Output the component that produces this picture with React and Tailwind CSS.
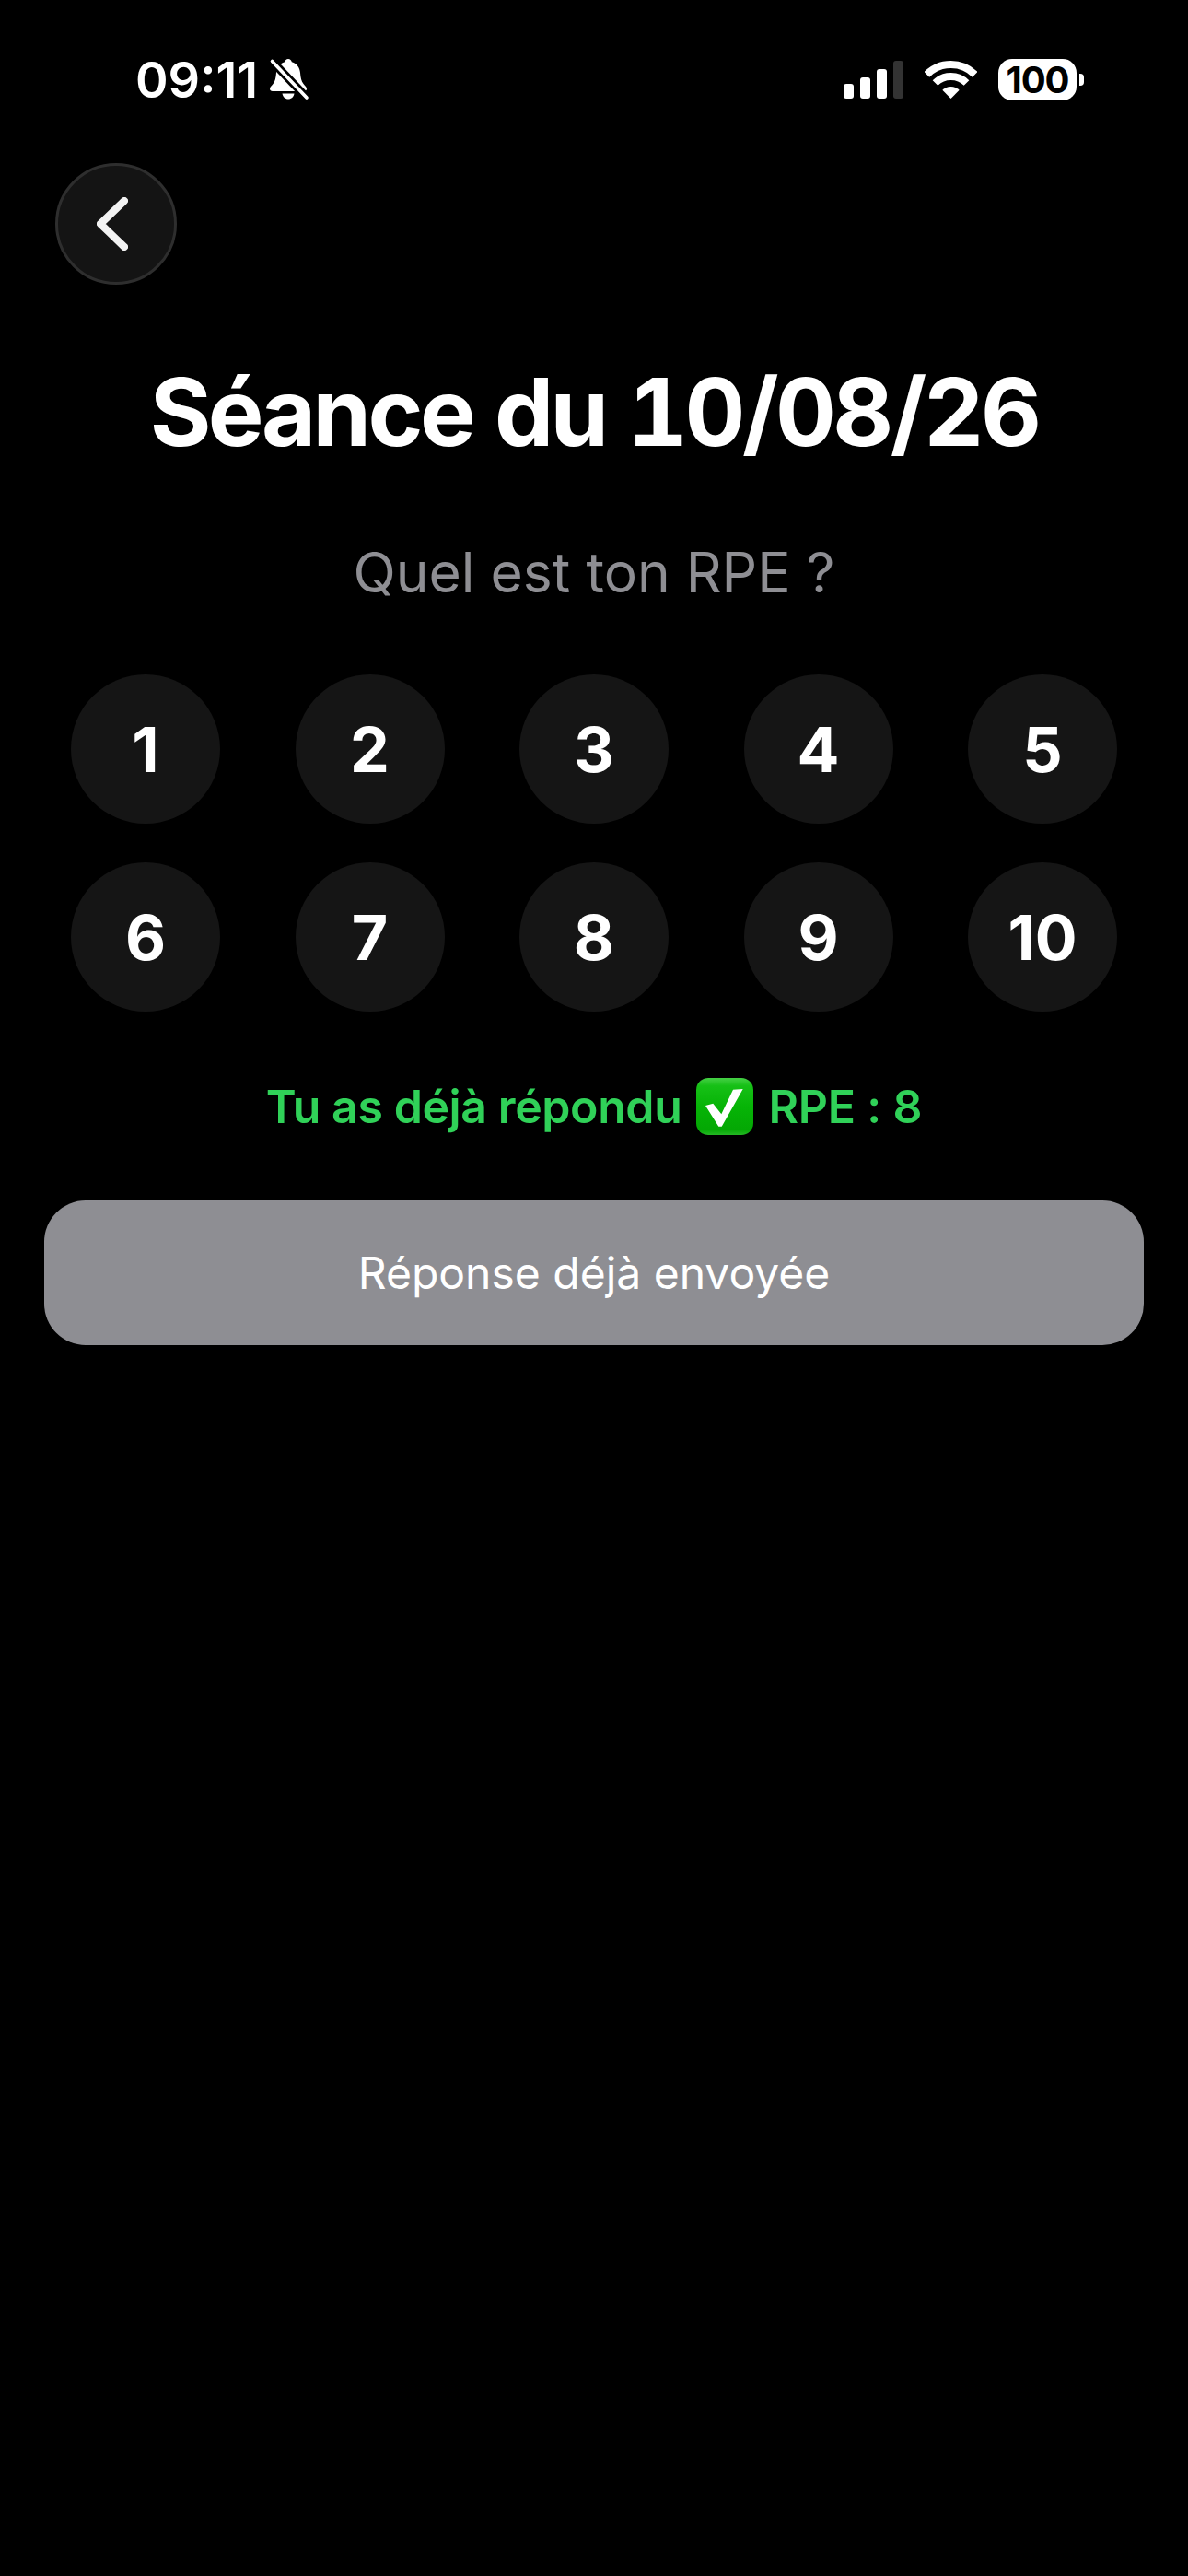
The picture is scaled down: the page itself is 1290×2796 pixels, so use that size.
const font = "font-['Inter','Liberation_Sans',sans-serif]";

function BellSlash() {
  return (
    <svg width="44" height="46" viewBox="0 0 44 46" className="ml-[12px] mt-[-2px]">
      <path
        d="M21 1c-2 0-3.400 1.400-3.800 3.200C11.500 5.800 8.500 10.500 8 16c-.4 5.500-1.200 9-3.500 12C3 30 1 31.500 1 33.500 1 35 2.200 36 4 36h34c1.800 0 3-1 3-2.500 0-2-2-3.500-3.500-5.500-2.300-3-3.100-6.500-3.500-12-.5-5.500-3.500-10.200-9.200-11.800C24.400 2.400 23 1 21 1z"
        fill="#fff"
      />
      <path d="M14.500 38.500h13c-.6 3.800-3.200 6-6.500 6s-5.900-2.200-6.500-6z" fill="#fff" />
      <path d="M3 3l38 40" stroke="#000" strokeWidth="9" />
      <path d="M3.500 3.500l37.500 39.500" stroke="#fff" strokeWidth="3.600" strokeLinecap="round" />
    </svg>
  );
}

function Signal() {
  return (
    <div className="flex items-end gap-[7px] h-[41px]">
      <div className="w-[11px] h-[16px] rounded-[3px] bg-white" />
      <div className="w-[11px] h-[23px] rounded-[3px] bg-white" />
      <div className="w-[11px] h-[32px] rounded-[3px] bg-white" />
      <div className="w-[11px] h-[41px] rounded-[3px] bg-[#333333]" />
    </div>
  );
}

function Wifi() {
  return (
    <svg width="57" height="41" viewBox="0 0 57 41">
      <path d="M2.340 14.840A37 37 0 0 1 54.660 14.840" fill="none" stroke="#fff" strokeWidth="8" />
      <path d="M11.530 24.030A24 24 0 0 1 45.470 24.030" fill="none" stroke="#fff" strokeWidth="8" />
      <path d="M28.500 41L19.310 31.810A13 13 0 0 1 37.690 31.810z" fill="#fff" />
    </svg>
  );
}

function Battery() {
  return (
    <div className="flex items-center gap-[3px]">
      <div className="w-[85px] h-[45px] rounded-[15px] bg-white flex items-center justify-center text-black text-[40px] font-bold tracking-[-1px] leading-none">
        100
      </div>
      <div className="w-[5px] h-[13px] rounded-r-[4px] bg-white" />
    </div>
  );
}

function CheckEmoji() {
  return (
    <svg width="62" height="62" viewBox="0 0 62 62" className="shrink-0">
      <defs>
        <linearGradient id="checkGreen" x1="0" y1="0" x2="0" y2="1">
          <stop offset="0" stopColor="#45d045" />
          <stop offset="0.14" stopColor="#16c016" />
          <stop offset="0.5" stopColor="#06b406" />
          <stop offset="0.9" stopColor="#04a804" />
          <stop offset="1" stopColor="#24b824" />
        </linearGradient>
      </defs>
      <rect x="0" y="0" width="62" height="62" rx="13" fill="url(#checkGreen)" />
      <path d="M10 30l8.300-2.300 9 11.600L40 12.700 50.700 12 27.700 52.700h-3.400z" fill="#fff" />
    </svg>
  );
}

export default function App() {
  const notes = [1, 2, 3, 4, 5, 6, 7, 8, 9, 10];

  return (
    <div className={`${font} min-h-[2796px] bg-black text-white flex flex-col`}>
      <div className="flex items-center justify-between pt-[64px] pl-[147px] pr-[113px] h-[109px]">
        <div className="flex items-center">
          <span className="text-[54px] font-semibold leading-none">09:11</span>
          <BellSlash />
        </div>
        <div className="flex items-center gap-[23px]">
          <Signal />
          <Wifi />
          <Battery />
        </div>
      </div>

      <div className="pl-[60px] mt-[68px]">
        <button className="w-[132px] h-[132px] rounded-full bg-[#141414] border-[3px] border-[#2e2e2e] flex items-center justify-center pr-2">
          <svg width="34" height="58" viewBox="0 0 34 58">
            <path d="M30 4L4 29l26 25" fill="none" stroke="#f2f2f2" strokeWidth="8" strokeLinecap="round" strokeLinejoin="round" />
          </svg>
        </button>
      </div>

      <h1 className="mt-[78px] text-center text-[102px] leading-[120px] font-bold tracking-[-3.6px] tabular-nums">
        Séance du 10/08/26
      </h1>

      <p className="mt-[74px] text-center text-[60.500px] leading-[80px] text-[#8e8e93]">Quel est ton RPE ?</p>

      <div className="mt-[71px] px-[77px] grid grid-cols-[repeat(5,162px)] gap-y-[42px] justify-between">
        {notes.map((n) => (
          <div
            key={n}
            className="w-[162px] h-[162px] rounded-full bg-[#151515] flex items-center justify-center text-[68px] font-bold"
          >
            {n}
          </div>
        ))}
      </div>

      <div className="mt-[72px] flex items-center justify-center gap-[16px] text-[50px] font-semibold text-[#30d158] h-[62px]">
        <span className="tracking-[-0.4px]">Tu as déjà répondu</span>
        <CheckEmoji />
        <span className="tracking-[-0.2px]">RPE : 8</span>
      </div>

      <div className="mt-[71px] mx-[48px] h-[157px] rounded-[45px] bg-[#8e8e93] flex items-center justify-center text-[48px] text-white">
        Réponse déjà envoyée
      </div>
    </div>
  );
}
